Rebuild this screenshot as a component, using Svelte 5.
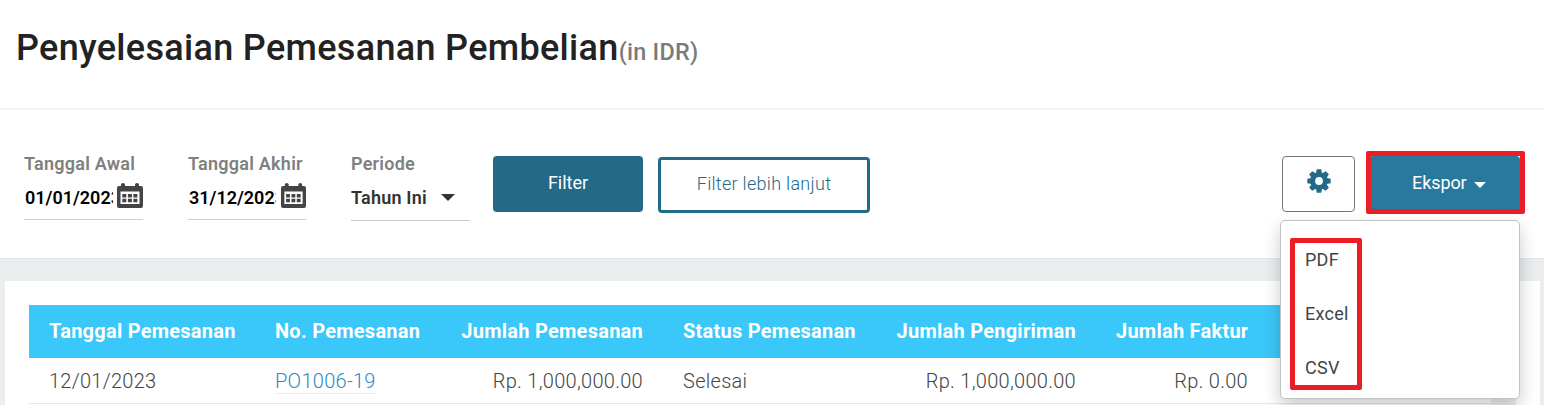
<script lang="ts">
  let startDate = '01/01/2023';
  let endDate = '31/12/2023';

  const exportFormats = ['PDF', 'Excel', 'CSV'];

  const orders = [
    {
      date: '12/01/2023',
      number: 'PO1006-19',
      orderTotal: 'Rp. 1,000,000.00',
      status: 'Selesai',
      deliveryTotal: 'Rp. 1,000,000.00',
      invoiceTotal: 'Rp. 0.00'
    }
  ];
</script>

{#snippet calendar()}
  <svg class="calendar" viewBox="0 0 26 25" width="26" height="25" preserveAspectRatio="none">
    <path fill="#444446" d="M2 3h2V1.500a2 1.500 0 0 1 4 0V3h10V1.500a2 1.500 0 0 1 4 0V3h2a2 2 0 0 1 2 2v18a2 2 0 0 1-2 2H2a2 2 0 0 1-2-2V5a2 2 0 0 1 2-2z" />
    <path fill="#fff" d="M3.500 8.500h19v12.500h-19z" />
    <path fill="#444446" d="M5.300 11h4v3.400h-4zm5.600 0h4v3.400h-4zm5.500 0h4v3.400h-4zM5.300 15.800h4v3.400h-4zm5.600 0h4v3.400h-4zm5.500 0h4v3.400h-4z" />
  </svg>
{/snippet}

<div class="page">
  <header class="title-bar">
    <h1>Penyelesaian Pemesanan Pembelian<small>(in IDR)</small></h1>
  </header>

  <section class="filters">
    <div class="field start">
      <label for="start">Tanggal Awal</label>
      <div class="control">
        <span id="start" class="date">{startDate}</span>
        {@render calendar()}
      </div>
    </div>

    <div class="field end">
      <label for="end">Tanggal Akhir</label>
      <div class="control">
        <span id="end" class="date">{endDate}</span>
        {@render calendar()}
      </div>
    </div>

    <div class="field period">
      <label for="period">Periode</label>
      <div class="control select">
        <span id="period">Tahun Ini</span>
        <i class="caret"></i>
      </div>
    </div>

    <button class="btn primary">Filter</button>
    <button class="btn outline">Filter lebih lanjut</button>

    <div class="actions">
      <button class="btn settings" aria-label="Pengaturan">
        <svg viewBox="-12 -12 24 24" width="24" height="24" fill="#226a88">
          <path fill-rule="evenodd" d="M0-8.700A8.700 8.700 0 1 1 0 8.700 8.700 8.700 0 1 1 0-8.700zM0-3.900A3.900 3.900 0 1 0 0 3.900 3.900 3.900 0 1 0 0-3.900z" />
          {#each [0, 45, 90, 135, 180, 225, 270, 315] as angle}
            <path d="M-3.100-7.500-2.200-11.700H2.200L3.100-7.500z" transform="rotate({angle})" />
          {/each}
        </svg>
      </button>

      <div class="export">
        <button class="btn export-btn">Ekspor <i class="caret"></i></button>
        <div class="mark mark-button"></div>
        <div class="menu">
          {#each exportFormats as format}
            <a href="#{format}">{format}</a>
          {/each}
          <div class="mark mark-items"></div>
        </div>
      </div>
    </div>
  </section>

  <main>
    <div class="card">
      <div class="table">
        <div class="row head">
          <span>Tanggal Pemesanan</span>
          <span>No. Pemesanan</span>
          <span class="num">Jumlah Pemesanan</span>
          <span>Status Pemesanan</span>
          <span class="num">Jumlah Pengiriman</span>
          <span class="num">Jumlah Faktur</span>
        </div>
        {#each orders as order}
          <div class="row">
            <span>{order.date}</span>
            <span><a href="#{order.number}">{order.number}</a></span>
            <span class="num">{order.orderTotal}</span>
            <span>{order.status}</span>
            <span class="num">{order.deliveryTotal}</span>
            <span class="num">{order.invoiceTotal}</span>
          </div>
        {/each}
      </div>
      <div class="scroll-track"></div>
    </div>
  </main>
</div>

<style>
  :global(body) {
    background: #eaeeef;
    overflow: hidden;
  }

  .page {
    height: 405px;
    overflow: hidden;
    font-family: Roboto, sans-serif;
    color: #444;
  }

  .page * {
    box-sizing: border-box;
  }

  .title-bar {
    height: 108px;
    padding: 26px 16px 0;
    background: #fff;
  }

  h1 {
    margin: 0;
    font-size: 36px;
    line-height: 44px;
    font-weight: 500;
    letter-spacing: 0.32px;
    color: #222;
    white-space: nowrap;
  }

  small {
    font-size: 23.4px;
    letter-spacing: 0.25px;
    color: #7a7a7a;
  }

  .filters {
    display: flex;
    align-items: flex-start;
    height: 151px;
    padding: 46px 24px 0;
    background: #fff;
    border-top: 2px solid #f0f3f4;
    border-bottom: 1px solid #e2e6e8;
  }

  .field {
    width: 119px;
    white-space: nowrap;
  }

  .field.start {
    margin-right: 45px;
  }

  .field.end {
    width: 118px;
    margin-right: 45px;
  }

  .field.period {
    margin-right: 23px;
  }

  label {
    display: block;
    margin-top: -2px;
    font-size: 18px;
    line-height: 20px;
    font-weight: 600;
    letter-spacing: 0.25px;
    color: #808080;
  }

  .control {
    display: flex;
    align-items: center;
    justify-content: space-between;
    height: 46px;
    padding: 1px 0 0 1px;
    border-bottom: 1px solid #c9d3d3;
    font-size: 18px;
    font-weight: 600;
    color: #000;
  }

  .date {
    width: 88px;
    overflow: hidden;
  }

  .end .date {
    width: 87px;
  }

  .calendar {
    flex: none;
    margin-top: -3px;
  }

  .end .calendar {
    width: 25px;
  }

  .select {
    justify-content: flex-start;
    gap: 14px;
    height: 47px;
    padding: 0;
    border-color: #c8c8c8;
    color: #333;
    letter-spacing: 0.2px;
  }

  .caret {
    display: inline-block;
    border: solid transparent;
    border-width: 7px 7px 0;
    border-top-color: currentColor;
  }

  .btn {
    width: 150px;
    height: 56px;
    padding: 0 0 3px;
    border: 0;
    border-radius: 4px;
    background: #226a88;
    color: #fff;
    font: 300 18px Roboto, sans-serif;
    letter-spacing: 0.2px;
    white-space: nowrap;
  }

  .primary {
    font-weight: 400;
    letter-spacing: 0;
  }

  .outline {
    width: 212px;
    margin: 1px 0 0 15px;
    border: 3px solid #226a88;
    background: #fff;
    color: #226a88;
    letter-spacing: 0.3px;
  }

  .actions {
    display: flex;
    gap: 14px;
    margin-left: auto;
  }

  .settings {
    width: 73px;
    padding: 0 0 6px;
    border: 1px solid #777;
    background: #fff;
  }

  .settings svg {
    display: block;
    margin: 0 auto;
  }

  .export {
    position: relative;
  }

  .export-btn {
    width: 151px;
    padding-left: 9px;
    background: #277a9e;
    font-weight: 400;
    letter-spacing: -0.1px;
  }

  .export-btn .caret {
    margin-left: 3px;
    vertical-align: 1px;
    border-width: 6px 6px 0;
  }

  .menu {
    position: absolute;
    top: 64px;
    right: 0;
    z-index: 2;
    width: 240px;
    height: 179px;
    padding: 12px 0;
    background: #fff;
    border: 1px solid #bfc3c4;
    border-radius: 5px;
    box-shadow: 0 8px 18px rgba(0, 0, 0, 0.2);
  }

  .menu a {
    display: block;
    height: 54px;
    padding-left: 24px;
    font-size: 18px;
    line-height: 54px;
    letter-spacing: 0.25px;
    color: #444;
    text-decoration: none;
  }

  /* highlight frames over the export controls */
  .mark {
    position: absolute;
    border: 5px solid #ee1c25;
    border-radius: 2px;
    pointer-events: none;
  }

  .mark-button {
    inset: -5px -5px -2px -3px;
  }

  .mark-items {
    top: 17px;
    left: 9px;
    width: 72px;
    height: 152px;
  }

  main {
    padding: 22px 4px 0 5px;
  }

  .card {
    position: relative;
    height: 200px;
    padding: 24px;
    background: #fff;
  }

  .table {
    width: 1462px;
  }

  .row {
    display: grid;
    grid-template-columns: 226px 186px 222px 213px 220px 172px;
    align-items: center;
    height: 46px;
    border-bottom: 1px solid #e8e8e8;
    font-size: 20px;
    font-weight: 300;
    letter-spacing: 0.28px;
    white-space: nowrap;
  }

  .row span {
    padding: 0 20px;
  }

  .row a {
    display: block;
    width: max-content;
    margin-top: 1px;
    color: #3186be;
    line-height: 24px;
    border-bottom: 1px dotted #ddd;
    text-decoration: none;
  }

  .head {
    height: 53px;
    padding-bottom: 1px;
    border: 0;
    background: #3ac7f9;
    color: #fff;
    font-weight: 700;
    letter-spacing: 0.25px;
  }

  .num {
    text-align: right;
  }

  .scroll-track {
    position: absolute;
    top: 77px;
    right: 24px;
    width: 25px;
    height: 123px;
    background: #eee;
  }
</style>
